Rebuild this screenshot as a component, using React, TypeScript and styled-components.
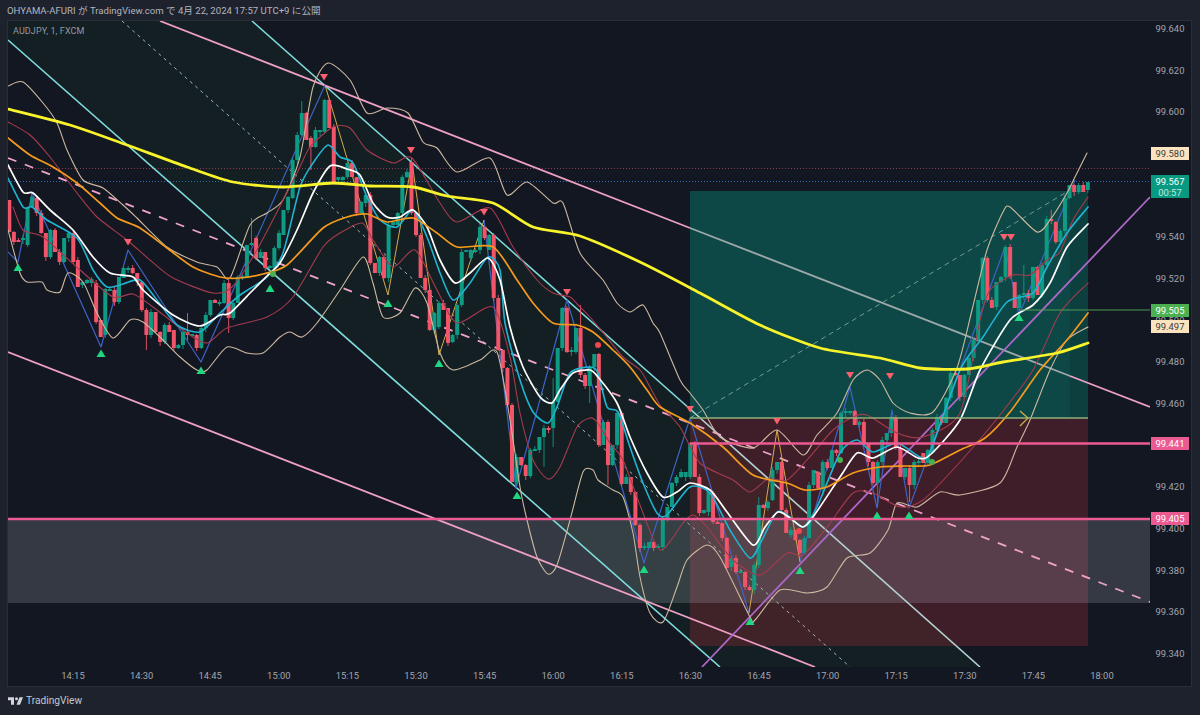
import React from 'react';
import styled, { createGlobalStyle } from 'styled-components';

const GlobalStyle = createGlobalStyle`
  html, body {
    margin: 0;
    padding: 0;
    background: #1e222d;
  }
`;

const Page = styled.div`
  width: 1200px;
  height: 715px;
  overflow: hidden;
  display: flex;
  flex-direction: column;
  padding: 0 8px 0 7px;
  box-sizing: border-box;
  background: #1e222d;
  font-family: "Roboto", "Liberation Sans", sans-serif;
`;

const PublishLine = styled.div`
  height: 20px;
  line-height: 22px;
  font-family: "Roboto", "Noto Sans CJK JP", sans-serif;
  font-size: 9.6px;
  color: #b2b5be;
  white-space: nowrap;
`;

const ChartFrame = styled.div`
  height: 667px;
  box-sizing: border-box;
  border: 1px solid #2a2e39;
  background: #131722;
  display: flex;
  flex-direction: column;
`;

const ChartRow = styled.div`
  flex: 1;
  display: flex;
  min-height: 0;
`;

const ChartPane = styled.div`
  position: relative;
  width: 1142px;
  height: 646px;
`;

const PlotSvg = styled.svg`
  display: block;
`;

const SymbolLegend = styled.div`
  position: absolute;
  left: 5px;
  top: 5px;
  font-size: 9px;
  letter-spacing: 0.1px;
  color: #9598a1;
`;

const PriceAxis = styled.div`
  position: relative;
  flex: 1;
`;

const PriceTick = styled.span`
  position: absolute;
  left: 1px;
  width: 38px;
  height: 12px;
  margin-top: -6px;
  line-height: 12px;
  text-align: center;
  font-size: 9.4px;
  color: #a3a6af;
`;

const PriceTag = styled.span<{ $bg: string; $fg: string }>`
  position: absolute;
  left: 1px;
  width: 38px;
  height: 13px;
  margin-top: -6.5px;
  line-height: 13px;
  text-align: center;
  font-size: 9.4px;
  background: ${(p) => p.$bg};
  color: ${(p) => p.$fg};
`;

const LastPriceTag = styled.div`
  position: absolute;
  left: 1px;
  top: 154px;
  width: 38px;
  height: 23px;
  display: flex;
  flex-direction: column;
  align-items: center;
  justify-content: center;
  font-size: 9.4px;
  line-height: 11px;
  background: #089981;
  color: #ffffff;
`;

const Countdown = styled.span`
  color: #c4e6df;
`;

const TimeAxis = styled.div`
  position: relative;
  height: 19px;
`;

const TimeTick = styled.span`
  position: absolute;
  top: 3px;
  width: 30px;
  margin-left: -15px;
  text-align: center;
  font-size: 9.4px;
  line-height: 12px;
  color: #a3a6af;
`;

const Footer = styled.div`
  flex: 1;
  display: flex;
  align-items: center;
  gap: 3px;
  padding: 0 0 1px 1px;
  font-family: "Roboto", "Liberation Sans", sans-serif;
  font-size: 10.2px;
  color: #c4c7cf;
`;

const priceY = (p: number) => 29 + (99.64 - p) * 2083.3 - 21;

// 99.580, 99.560 and 99.440 sit fully behind the price tags
const priceTicks = ['99.640', '99.620', '99.600', '99.540', '99.520', '99.500', '99.480', '99.460', '99.420', '99.400', '99.380', '99.360', '99.340'];
const timeTicks = ['14:15', '14:30', '14:45', '15:00', '15:15', '15:30', '15:45', '16:00', '16:15', '16:30', '16:45', '17:00', '17:15', '17:30', '17:45', '18:00'];

// [open, close] in page pixels, one per minute, read off the reference
const candles: [number, number][] = [
  [200,232],[232,242],[240,241],[240,238],[245,208],[207,197],[198,213],[213,233],[233,257],[257,230],
  [230,252],[252,262],[262,238],[238,233],[233,262],[260,287],[285,282],[283,280],[283,279],[283,322],
  [320,337],[335,289],[290,289],[290,302],[302,277],[278,268],[270,268],[268,273],[273,282],[282,310],
  [310,335],[335,312],[312,332],[332,342],[342,325],[325,332],[330,348],[348,345],[345,332],[332,335],
  [335,334],[335,348],[348,328],[328,315],[315,300],[300,303],[303,302],[303,283],[283,318],[318,303],
  [303,277],[277,276],[277,245],[245,243],[238,258],[258,252],[252,268],[268,266],[268,248],[248,233],
  [235,210],[210,197],[198,160],[160,135],[135,113],[113,140],[138,147],[147,130],[132,130],[132,100],
  [100,128],[127,182],[180,177],[180,177],[177,163],[163,177],[177,213],[213,202],[203,195],[195,263],
  [263,273],[273,257],[257,278],[278,225],[225,222],[225,213],[213,177],[177,172],[162,213],[213,235],
  [235,278],[278,290],[290,330],[330,313],[327,303],[303,310],[308,343],[342,335],[335,305],[305,252],
  [252,250],[258,250],[252,250],[250,227],[227,238],[250,235],[235,298],[298,350],[350,368],[368,405],
  [405,482],[482,457],[457,465],[465,476],[476,450],[451,449],[450,437],[437,428],[428,429],[428,402],
  [402,348],[348,308],[308,352],[352,350],[352,328],[328,375],[375,386],[386,367],[367,354],[354,445],
  [445,422],[422,465],[465,445],[445,413],[413,484],[484,477],[477,492],[492,525],[525,548],[548,546],
  [548,542],[542,548],[547,546],[547,520],[520,507],[507,483],[483,477],[477,472],[477,472],[477,443],
  [443,477],[477,513],[513,510],[512,492],[493,522],[522,524],[523,538],[538,568],[567,558],[558,572],
  [572,571],[572,587],[587,590],[590,565],[565,505],[505,508],[508,502],[500,470],[470,462],[462,510],
  [510,533],[535,530],[530,540],[540,553],[553,538],[538,485],[485,470],[472,488],[488,462],[462,468],
  [468,450],[450,453],[453,413],[413,411],[413,411],[411,425],[425,422],[422,443],[443,462],[462,483],
  [483,462],[462,440],[440,433],[433,417],[417,448],[448,477],[477,468],[468,485],[485,462],[463,461],
  [453,463],[463,450],[453,430],[430,417],[417,423],[423,398],[398,373],[373,375],[375,397],[397,375],
  [375,358],[358,340],[340,300],[300,258],[258,300],[300,308],[307,282],[282,277],[277,247],[247,277],
  [282,308],[308,295],[295,293],[293,298],[298,267],[267,295],[295,265],[265,219],[219,221],[222,242],
  [242,231],[231,198],[198,185],[185,192],[192,185],[185,192],[190,182],
];

// the wicks that stick out further than the rest: index -> [top, bottom]
const longWicks: Record<number, [number, number]> = {
  30: [308, 350], 39: [313, 340], 48: [280, 333], 53: [218, 246], 64: [101, 136], 66: [136, 170],
  88: [158, 215], 117: [425, 467], 119: [378, 447], 125: [305, 378], 127: [365, 403], 131: [420, 485],
  164: [497, 568], 190: [460, 507], 197: [465, 502], 222: [265, 300], 228: [210, 224],
};

const BULL = '#0f9a83';
const BEAR = '#f2556a';

const Candles = () => (
  <g>
    {candles.map(([open, close], i) => {
      const x = 9.3 + i * 4.57;
      const top = Math.min(open, close);
      const bottom = Math.max(open, close);
      const colour = close < open ? BULL : BEAR;
      const [wickTop, wickBottom] = longWicks[i] ?? [top - ((i * 37) % 4), bottom + ((i * 53) % 5)];
      return (
        <g key={i}>
          <line x1={x} x2={x} y1={wickTop} y2={wickBottom} stroke={colour} strokeWidth={0.9} />
          <rect x={x - 2} y={top} width={4} height={Math.max(bottom - top, 2)} fill={colour} />
        </g>
      );
    })}
  </g>
);

type Pt = [number, number];

// catmull-rom through the points, good enough for the moving averages
const smooth = (pts: Pt[]) => {
  let d = `M${pts[0][0]} ${pts[0][1]}`;
  for (let i = 0; i < pts.length - 1; i++) {
    const p0 = pts[Math.max(i - 1, 0)];
    const p1 = pts[i];
    const p2 = pts[i + 1];
    const p3 = pts[Math.min(i + 2, pts.length - 1)];
    const c1x = p1[0] + (p2[0] - p0[0]) / 8;
    const c1y = p1[1] + (p2[1] - p0[1]) / 8;
    const c2x = p2[0] - (p3[0] - p1[0]) / 8;
    const c2y = p2[1] - (p3[1] - p1[1]) / 8;
    d += `C${c1x.toFixed(1)} ${c1y.toFixed(1)} ${c2x.toFixed(1)} ${c2y.toFixed(1)} ${p2[0]} ${p2[1]}`;
  }
  return d;
};

const tanUpper: Pt[] = [[8,86],[23,82],[43,103],[57,123],[67,150],[83,180],[103,188],[123,205],[137,218],[167,247],[197,262],[217,267],[230,278],[250,225],[267,213],[283,200],[300,157],[313,87],[328,63],[350,80],[367,113],[387,108],[408,113],[423,142],[437,148],[457,172],[490,158],[507,195],[527,182],[553,203],[563,203],[580,253],[603,280],[617,303],[630,312],[643,305],[653,323],[660,333],[680,380],[690,393],[703,410],[720,437],[753,448],[777,430],[803,455],[817,435],[837,413],[853,380],[867,370],[880,380],[893,403],[910,413],[933,412],[957,368],[972,310],[987,250],[1003,212],[1010,207],[1037,232],[1050,220],[1067,193],[1075,177],[1087,153]];
const tanLower: Pt[] = [[8,230],[20,273],[27,282],[42,282],[47,290],[60,292],[68,273],[83,282],[97,313],[113,338],[130,320],[143,322],[163,340],[180,357],[197,370],[207,370],[227,347],[247,353],[263,353],[280,337],[290,332],[302,337],[317,323],[340,290],[363,257],[373,283],[383,317],[400,313],[415,288],[427,303],[440,353],[453,370],[480,360],[497,352],[510,420],[520,487],[527,520],[537,557],[548,574],[557,565],[570,520],[583,472],[593,470],[598,480],[613,490],[623,497],[633,533],[640,577],[650,613],[663,622],[677,587],[687,560],[707,545],[720,557],[750,617],[755,620],[780,590],[807,593],[827,587],[847,558],[870,553],[888,530],[897,503],[917,507],[940,492],[960,495],[1000,483],[1017,447],[1030,420],[1050,370],[1067,340],[1088,327]];
const redUpper: Pt[] = [[8,122],[30,135],[50,157],[77,193],[97,217],[127,240],[150,260],[173,278],[213,293],[232,287],[258,248],[297,173],[310,147],[333,127],[350,128],[367,150],[393,163],[412,158],[440,203],[457,222],[490,208],[513,247],[537,280],[553,293],[570,297],[578,305],[590,317],[605,335],[623,357],[640,370],[650,387],[660,405],[680,427],[700,463],[733,480],[750,492],[768,479],[787,480],[807,460],[833,430],[853,417],[867,415],[897,433],[923,437],[960,413],[980,320],[990,290],[1013,275],[1030,275],[1047,260],[1060,252],[1073,220],[1088,197]];
const redLower: Pt[] = [[13,207],[23,230],[43,237],[80,270],[113,297],[133,294],[157,310],[187,333],[207,343],[227,328],[267,317],[293,297],[323,247],[340,233],[362,223],[373,240],[393,267],[415,250],[437,290],[457,323],[493,307],[510,357],[520,413],[533,460],[548,479],[560,467],[577,427],[590,418],[597,422],[610,443],[623,460],[640,505],[660,550],[683,523],[693,515],[707,527],[733,560],[760,575],[787,553],[803,555],[827,527],[853,493],[873,493],[900,507],[923,500],[960,462],[1000,415],[1033,370],[1060,313],[1088,283]];
const cyan: Pt[] = [[8,178],[23,207],[32,207],[47,220],[77,238],[93,270],[107,287],[123,284],[140,280],[157,300],[177,325],[200,332],[220,313],[240,295],[267,277],[283,253],[300,187],[313,163],[328,145],[340,157],[353,163],[367,197],[380,220],[397,227],[413,210],[427,237],[440,273],[453,300],[470,283],[488,257],[500,270],[505,323],[520,380],[533,412],[548,423],[557,407],[570,373],[590,367],[598,373],[607,407],[618,412],[630,447],[643,483],[657,513],[667,515],[690,487],[710,493],[730,530],[750,558],[762,540],[777,512],[790,517],[803,527],[817,507],[840,453],[857,440],[873,452],[897,443],[920,457],[930,452],[960,370],[983,337],[1007,302],[1033,293],[1047,267],[1067,233],[1088,207]];
const white: Pt[] = [[8,165],[23,192],[33,193],[50,210],[73,230],[93,257],[110,273],[133,277],[143,290],[173,315],[200,326],[220,315],[230,313],[253,290],[270,273],[280,263],[297,230],[313,193],[330,166],[347,169],[360,175],[373,203],[387,217],[400,217],[413,210],[427,227],[440,260],[455,283],[470,273],[488,258],[500,280],[510,327],[523,367],[540,397],[552,403],[560,390],[573,373],[590,370],[598,377],[617,403],[630,437],[647,473],[663,497],[677,492],[690,483],[710,490],[727,512],[753,545],[765,527],[778,512],[790,518],[803,527],[813,517],[840,477],[857,453],[873,458],[897,447],[918,458],[930,455],[960,420],[980,370],[1010,320],[1033,305],[1050,283],[1067,247],[1088,224]];
const orange: Pt[] = [[8,138],[30,155],[53,167],[77,183],[100,203],[117,218],[140,228],[167,248],[193,267],[220,277],[240,278],[263,274],[287,265],[323,228],[347,217],[367,214],[387,222],[413,218],[437,233],[457,247],[493,247],[517,280],[533,303],[553,323],[577,325],[593,332],[613,350],[630,367],[647,390],[660,407],[690,423],[723,447],[753,475],[787,483],[805,490],[827,487],[853,473],[880,467],[907,466],[930,465],[960,450],[985,438],[1010,412],[1040,370],[1067,340],[1088,313]];
const yellow: Pt[] = [[8,109],[70,125],[127,145],[187,167],[233,182],[283,187],[333,183],[370,186],[413,187],[447,196],[493,203],[533,227],[580,236],[640,262],[700,293],[760,325],[820,348],[880,358],[920,368],[967,369],[1003,362],[1057,353],[1088,343]];

const zigzagBlue: Pt[][] = [
  [[8,252],[18,262],[32,193],[101,347],[128,250],[201,362],[325,85]],
  [[484,220],[516,488],[567,300],[644,563],[690,418],[749,613]],
  [[800,562],[850,387],[877,508],[892,410],[909,508],[1005,247],[1019,315],[1075,180]],
];
const zigzagTan: Pt[][] = [
  [[325,85],[388,295],[412,162],[439,355],[484,220]],
  [[749,613],[777,430],[800,562]],
];

const Polyline = ({ pts, colour, width }: { pts: Pt[]; colour: string; width: number }) => (
  <polyline points={pts.map((p) => p.join(',')).join(' ')} fill="none" stroke={colour} strokeWidth={width} strokeLinejoin="round" />
);

const Curve = ({ pts, colour, width }: { pts: Pt[]; colour: string; width: number }) => (
  <path d={smooth(pts)} fill="none" stroke={colour} strokeWidth={width} strokeLinejoin="round" strokeLinecap="round" />
);

const upMarks: Pt[] = [[18,267],[101,353],[201,370],[270,288],[388,303],[439,363],[517,495],[644,569],[750,621],[800,570],[877,515],[909,515],[1019,317]];
const downMarks: Pt[] = [[128,242],[324,77],[411,150],[484,212],[567,292],[690,409],[777,421],[850,375],[890,376],[1004,237],[1011,237]];

const Markers = () => (
  <g>
    {upMarks.map(([x, y]) => (
      <polygon key={`u${x}`} points={`${x - 4.5},${y + 4} ${x + 4.5},${y + 4} ${x},${y - 3.5}`} fill="#1fd781" />
    ))}
    {downMarks.map(([x, y]) => (
      <polygon key={`d${x}`} points={`${x - 4},${y - 3} ${x + 4},${y - 3} ${x},${y + 3.5}`} fill="#f95f6c" />
    ))}
    <circle cx={598} cy={345} r={3} fill="#f2454f" />
    <circle cx={799} cy={531} r={3} fill="#f2454f" />
    <circle cx={840} cy={460} r={3} fill="#4caf50" />
    <circle cx={932} cy={462} r={3} fill="#4caf50" />
    <circle cx={273} cy={274} r={3} fill="#4caf50" />
  </g>
);

const ChartDrawing = () => (
  <PlotSvg width={1142} height={646} viewBox="8 21 1142 646">
    <polygon points="8,40 8,21 252,21 980,667 720,667" fill="#131f22" />
    <rect x={690} y={191} width={398} height={227} fill="rgba(8,153,129,0.38)" />
    <rect x={1070} y={191} width={18} height={227} fill="rgba(19,23,34,0.18)" />
    <rect x={690} y={418} width={398} height={228} fill="rgba(242,54,69,0.2)" />
    <rect x={8} y={519} width={1142} height={84} fill="rgba(178,181,190,0.22)" />

    <line x1={8} y1={168.5} x2={1150} y2={168.5} stroke="#8c3b4e" strokeDasharray="1 2" />
    <line x1={8} y1={181.5} x2={1150} y2={181.5} stroke="#2f6ab8" strokeDasharray="1 2" />

    <line x1={8} y1={40} x2={720} y2={667} stroke="#7fdcdc" strokeWidth={1.6} />
    <line x1={252} y1={21} x2={690} y2={409} stroke="#7fdcdc" strokeWidth={1.6} />
    <line x1={690} y1={409} x2={980} y2={667} stroke="#b4d2d4" strokeWidth={1.6} />
    <line x1={122} y1={21} x2={850} y2={667} stroke="#a0b8b8" strokeWidth={1} strokeDasharray="3 4" />
    <line x1={690} y1={418} x2={1070} y2={190} stroke="#6f9c94" strokeWidth={1} strokeDasharray="5 4" />
    <line x1={160} y1={21} x2={690} y2={228} stroke="#ee9fc4" strokeWidth={1.8} />
    <line x1={690} y1={228} x2={1070} y2={376} stroke="#9da8ab" strokeWidth={1.8} />
    <line x1={1070} y1={376} x2={1150} y2={407} stroke="#ee9fc4" strokeWidth={1.8} />
    <line x1={8} y1={352} x2={815} y2={667} stroke="#ee9fc4" strokeWidth={1.8} />
    <line x1={8} y1={158} x2={1150} y2={602} stroke="#f0a3c9" strokeWidth={1.8} strokeDasharray="9 9" />
    <line x1={702} y1={667} x2={1150} y2={197} stroke="#ad68c8" strokeWidth={1.8} />

    {zigzagBlue.map((pts, i) => (
      <Polyline key={i} pts={pts} colour="#3f63c4" width={1.2} />
    ))}
    {zigzagTan.map((pts, i) => (
      <Polyline key={i} pts={pts} colour="#d3ab4d" width={1} />
    ))}

    <Candles />

    <Curve pts={tanUpper} colour="#cdb9a0" width={1.1} />
    <Curve pts={tanLower} colour="#cdb9a0" width={1.1} />
    <Curve pts={redUpper} colour="#a53b4e" width={1.1} />
    <Curve pts={redLower} colour="#a53b4e" width={1.1} />
    <Curve pts={cyan} colour="#1fb4d2" width={1.6} />
    <Curve pts={white} colour="#ffffff" width={1.7} />
    <Curve pts={orange} colour="#f59a1c" width={1.7} />
    <Curve pts={yellow} colour="#f8f32b" width={2.8} />

    <line x1={690} y1={418} x2={1088} y2={418} stroke="#8db078" strokeWidth={1.3} />
    <line x1={1019} y1={310} x2={1150} y2={310} stroke="#4f9a55" strokeWidth={1} />
    <line x1={690} y1={443.5} x2={1150} y2={443.5} stroke="#ec5a92" strokeWidth={2.4} />
    <line x1={8} y1={519} x2={1150} y2={519} stroke="#ec5a92" strokeWidth={2.4} />
    <path d="M1020 411l8 7-8 8" fill="none" stroke="#c9b24e" strokeWidth={1.3} />

    <Markers />
  </PlotSvg>
);

const TradingViewLogo = () => (
  <svg width={15} height={8} viewBox="2 6 30 15" fill="#d1d4dc">
    <path d="M14 6H2v6h6v9h6V6zm12 15h-7l6-15h7l-6 15zm-7-9a3 3 0 1 0 0-6 3 3 0 0 0 0 6z" />
  </svg>
);

export default function App() {
  return (
    <Page>
      <GlobalStyle />
      <PublishLine>OHYAMA-AFURI が TradingView.com で 4月 22, 2024 17:57 UTC+9 に公開</PublishLine>
      <ChartFrame>
        <ChartRow>
          <ChartPane>
            <ChartDrawing />
            <SymbolLegend>AUDJPY, 1, FXCM</SymbolLegend>
          </ChartPane>
          <PriceAxis>
            {priceTicks.map((t) => (
              <PriceTick key={t} style={{ top: priceY(parseFloat(t)) }}>{t}</PriceTick>
            ))}
            <PriceTag $bg="#fbe3c0" $fg="#3a3a3a" style={{ top: priceY(99.58) }}>99.580</PriceTag>
            <LastPriceTag>
              <span>99.567</span>
              <Countdown>00:57</Countdown>
            </LastPriceTag>
            <PriceTag $bg="#4caf50" $fg="#ffffff" style={{ top: priceY(99.505) }}>99.505</PriceTag>
            <PriceTag $bg="#fbe3c0" $fg="#3a3a3a" style={{ top: priceY(99.497) }}>99.497</PriceTag>
            <PriceTag $bg="#ec5a92" $fg="#ffffff" style={{ top: priceY(99.441) }}>99.441</PriceTag>
            <PriceTag $bg="#ec5a92" $fg="#ffffff" style={{ top: priceY(99.405) }}>99.405</PriceTag>
          </PriceAxis>
        </ChartRow>
        <TimeAxis>
          {timeTicks.map((t, i) => (
            <TimeTick key={t} style={{ left: 65 + i * 68.6 }}>{t}</TimeTick>
          ))}
        </TimeAxis>
      </ChartFrame>
      <Footer>
        <TradingViewLogo />
        <span>TradingView</span>
      </Footer>
    </Page>
  );
}
